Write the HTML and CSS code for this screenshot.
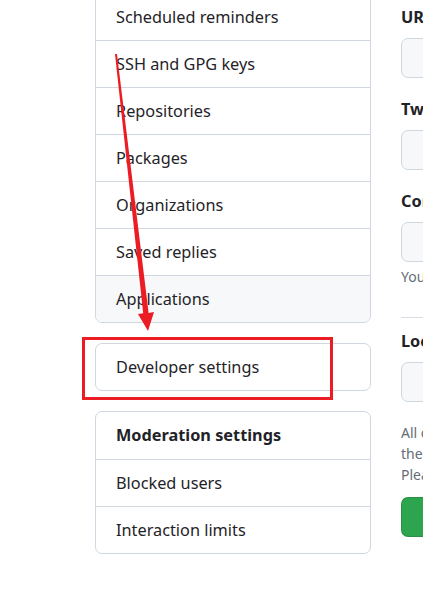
FILE: index.html
```html
<!DOCTYPE html>
<html lang="en">
<head>
<meta charset="utf-8">
<title>Settings</title>
<link rel="stylesheet" href="styles.css">
</head>
<body>
<div class="page">
  <nav class="sidebar">
    <div class="menu">
      <a class="menu-item">Scheduled reminders</a>
      <a class="menu-item">SSH and GPG keys</a>
      <a class="menu-item">Repositories</a>
      <a class="menu-item">Packages</a>
      <a class="menu-item">Organizations</a>
      <a class="menu-item">Saved replies</a>
      <a class="menu-item selected">Applications</a>
    </div>
    <div class="menu">
      <a class="menu-item">Developer settings</a>
    </div>
    <div class="menu">
      <div class="menu-item heading">Moderation settings</div>
      <a class="menu-item">Blocked users</a>
      <a class="menu-item">Interaction limits</a>
    </div>
  </nav>
  <main class="content">
    <div class="group">
      <label class="label">URL</label>
      <div class="input"></div>
    </div>
    <div class="group">
      <label class="label">Twitter username</label>
      <div class="input"></div>
    </div>
    <div class="group last">
      <label class="label">Company</label>
      <div class="input"></div>
      <p class="note">You can @mention your company’s GitHub organization to link it.</p>
    </div>
    <hr class="rule">
    <div class="group">
      <label class="label">Location</label>
      <div class="input"></div>
    </div>
    <p class="info">All of the fields on this page are optional and can be deleted at any time, and by filling<br>them out, you're giving us consent to share this data wherever your user profile appears.<br>Please see our privacy statement to learn more about how we use this information.</p>
    <button class="btn">Update profile</button>
  </main>
</div>
<svg class="annotation" width="423" height="611" viewBox="0 0 423 611">
  <polygon fill="#ec1c24" points="115,54 117,54 148.6,313 154,312 148,331 138,314 143.2,313.3"/>
  <rect x="83.5" y="338.5" width="248" height="60" fill="none" stroke="#ec1c24" stroke-width="3"/>
</svg>
</body>
</html>
```
FILE: styles.css
```css
html, body {
  margin: 0;
  padding: 0;
  background: #ffffff;
  overflow: hidden;
}
body {
  width: 423px;
  height: 611px;
  font-family: "Noto Sans", "Open Sans", "DejaVu Sans", sans-serif;
  color: #1f2328;
  position: relative;
}
.page {
  display: flex;
  align-items: flex-start;
  gap: 30px;
  padding-left: 95px;
}
.sidebar {
  width: 276px;
  flex: none;
  display: flex;
  flex-direction: column;
  gap: 20px;
  margin-top: -7px;
}
.menu {
  border: 1px solid #d0d7de;
  border-radius: 7px;
  overflow: hidden;
  display: flex;
  flex-direction: column;
}
.menu-item {
  display: block;
  padding: 12px 20px;
  line-height: 22px;
  font-size: 16.3px;
  color: #1f2328;
  border-top: 1px solid #d0d7de;
}
.menu-item:first-child {
  border-top: none;
}
.menu-item.selected {
  background: #f6f8fa;
}
.menu-item.heading {
  font-weight: 700;
  padding-bottom: 13px;
}
.content {
  width: 620px;
  flex: none;
  padding-top: 6px;
}
.group {
  margin-bottom: 20px;
}
.group.last {
  margin-bottom: 0;
}
.label {
  display: block;
  font-weight: 700;
  font-size: 16.3px;
  line-height: 22px;
  margin-bottom: 10px;
}
.input {
  height: 38px;
  border: 1px solid #d0d7de;
  border-radius: 7px;
  background: #f6f8fa;
}
.note {
  margin: 5px 0 0;
  font-size: 14px;
  line-height: 20px;
  color: #656d76;
}
.rule {
  border: none;
  border-top: 1px solid #d8dee4;
  margin: 30px 0 12px;
}
.info {
  margin: 0;
  font-size: 14px;
  line-height: 21px;
  color: #656d76;
  white-space: nowrap;
}
.btn {
  margin-top: 12px;
  height: 40px;
  padding: 0 20px;
  font-family: inherit;
  font-size: 16px;
  font-weight: 600;
  color: #ffffff;
  background: #2da44e;
  border: 1px solid rgba(27, 31, 36, 0.15);
  border-radius: 7px;
}
.annotation {
  position: absolute;
  left: 0;
  top: 0;
  pointer-events: none;
}
```
